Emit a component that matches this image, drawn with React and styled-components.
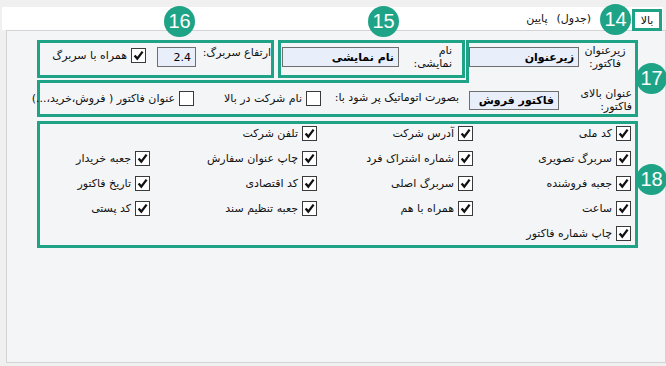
import styled, { createGlobalStyle } from "styled-components";

const GREEN = "#1ea386";

const GlobalStyle = createGlobalStyle`
  html, body {
    margin: 0;
    padding: 0;
    background: #f0f0f0;
  }
`;

const Screen = styled.div`
  position: relative;
  width: 666px;
  height: 366px;
  box-sizing: border-box;
  padding-top: 7px;
  direction: rtl;
  font-family: "DejaVu Sans", Tahoma, sans-serif;
  font-size: 11px;
  color: #111;
`;

const TabStrip = styled.div`
  display: flex;
  align-items: flex-start;
  height: 23px;
  margin: 0 3px 0 2px;
  background: #fff;
`;

const ActiveTab = styled.div`
  position: relative;
  z-index: 2;
  box-sizing: border-box;
  width: 30px;
  height: 22px;
  margin: 2px 1px 0 0;
  border: 3px solid ${GREEN};
  background: #fff;
  display: flex;
  align-items: center;
  justify-content: center;
`;

const Tab = styled.div`
  margin-right: ${(p) => p.$gap}px;
  line-height: 24px;
`;

const Panel = styled.div`
  box-sizing: border-box;
  width: 660px;
  height: 333px;
  margin-left: 2px;
  border: 1px solid #d3d3d6;
  background: #f4f5f7;
  padding: 9px 27px 0 30px;
`;

const TopRow = styled.div`
  display: flex;
  height: 38px;
`;

const Frame = styled.div`
  box-sizing: border-box;
  border: 3px solid ${GREEN};
  display: flex;
  align-items: flex-start;
  flex: none;
`;

const Cell = styled(Frame)`
  width: ${(p) => p.$w}px;
  margin-right: ${(p) => p.$gap || 0}px;
`;

/* box 17 runs down into the next row and hides that row's top edge */
const OpenCell = styled(Cell)`
  position: relative;
  z-index: 1;
  border-bottom: 0;
  margin-bottom: -5px;
  background: #f4f5f7;
`;

const WideRow = styled(Frame)`
  height: 37px;
  margin-top: 2px;
`;

const Label = styled.div`
  flex: none;
  width: ${(p) => p.$w}px;
  margin-top: ${(p) => p.$top || 0}px;
  padding-right: ${(p) => p.$pad || 0}px;
  box-sizing: border-box;
  text-align: ${(p) => p.$align || "right"};
  line-height: 13px;
  white-space: nowrap;
`;

const Field = styled.div`
  flex: none;
  box-sizing: border-box;
  width: ${(p) => p.$w}px;
  height: ${(p) => p.$h || 20}px;
  margin-top: ${(p) => p.$top || 0}px;
  margin-right: ${(p) => p.$gap || 0}px;
  padding: 0 4px;
  border: 1px solid #6e6e6e;
  background: #e8eefa;
  font-weight: ${(p) => (p.$bold ? 700 : 400)};
  color: #000;
  display: flex;
  align-items: center;
`;

const Check = styled.div`
  flex: none;
  display: flex;
  align-items: center;
  gap: 4px;
  margin-top: ${(p) => p.$top || 0}px;
  margin-right: ${(p) => p.$gap || 0}px;
  white-space: nowrap;
`;

const Box = styled.span`
  flex: none;
  box-sizing: border-box;
  width: 15px;
  height: 15px;
  border: 1px solid #3a3a3a;
  background: #fff;
  display: flex;
  align-items: center;
  justify-content: center;
`;

const Grid = styled(Frame)`
  display: grid;
  grid-template-columns: 158px 156px 167px auto;
  grid-auto-rows: 25px;
  align-items: start;
  height: 127px;
  margin-top: 4px;
  padding: 2px 4px 0 0;
`;

const Badge = styled.div`
  position: absolute;
  z-index: 5;
  left: ${(p) => p.$x}px;
  top: ${(p) => p.$y}px;
  width: 31px;
  height: 31px;
  border-radius: 50%;
  background: ${GREEN};
  color: #fff;
  direction: ltr;
  font-family: "Liberation Sans", Arial, sans-serif;
  font-size: 20px;
  display: flex;
  align-items: center;
  justify-content: center;
`;

function CheckBox({ checked, label, top, gap }) {
  return (
    <Check $top={top} $gap={gap}>
      <Box>
        {checked && (
          <svg width="13" height="13" viewBox="0 0 13 13">
            <path d="M2.6 6.4 L5.3 9.6 L10.6 2.6" fill="none" stroke="#111" strokeWidth="2.3" />
          </svg>
        )}
      </Box>
      {label}
    </Check>
  );
}

const options = [
  "کد ملی", "آدرس شرکت", "تلفن شرکت", null,
  "سربرگ تصویری", "شماره اشتراک فرد", "چاپ عنوان سفارش", "جعبه خریدار",
  "جعبه فروشنده", "سربرگ اصلی", "کد اقتصادی", "تاریخ فاکتور",
  "ساعت", "همراه با هم", "جعبه تنظیم سند", "کد پستی",
  "چاپ شماره فاکتور",
];

export default function App() {
  return (
    <>
      <GlobalStyle />
      <Screen>
        <TabStrip>
          <ActiveTab>بالا</ActiveTab>
          <Tab $gap={41}>(جدول)</Tab>
          <Tab $gap={9}>پایین</Tab>
        </TabStrip>

        <Panel>
          <TopRow>
            <OpenCell $w={172}>
              <Label $w={56} $top={1} $pad={4} $align="center">
                زیرعنوان
                <br />
                فاکتور:
              </Label>
              <Field $w={110} $top={4} $bold>زیرعنوان</Field>
            </OpenCell>

            <Cell $w={187} $gap={1}>
              <Label $w={63} $top={1} $pad={10}>
                نام
                <br />
                نمایشی:
              </Label>
              <Field $w={117} $top={4} $bold>نام نمایشی</Field>
            </Cell>

            <Cell $w={237} $gap={4}>
              <Label $w={65} $top={3}>ارتفاع سربرگ:</Label>
              <Field $w={39} $top={4} $gap={10}>2.4</Field>
              <CheckBox checked label="همراه با سربرگ" top={5} gap={11} />
            </Cell>
          </TopRow>

          <WideRow>
            <Label $w={76} $top={4} $pad={3}>
              عنوان بالای
              <br />
              فاکتور:
            </Label>
            <Field $w={90} $h={19} $top={8} $bold>فاکتور فروش</Field>
            <Label $w={130} $top={8} $pad={10}>بصورت اتوماتیک پر شود با:</Label>
            <CheckBox label="نام شرکت در بالا" top={8} gap={18} />
            <CheckBox label="عنوان فاکتور ( فروش،خرید،...)" top={8} gap={30} />
          </WideRow>

          <Grid>
            {options.map((o, i) =>
              o ? <CheckBox key={i} checked label={o} /> : <span key={i} />
            )}
          </Grid>
        </Panel>

        <Badge $x={600} $y={4}>14</Badge>
        <Badge $x={368} $y={6}>15</Badge>
        <Badge $x={164} $y={6}>16</Badge>
        <Badge $x={636} $y={63}>17</Badge>
        <Badge $x={636} $y={164}>18</Badge>
      </Screen>
    </>
  );
}
